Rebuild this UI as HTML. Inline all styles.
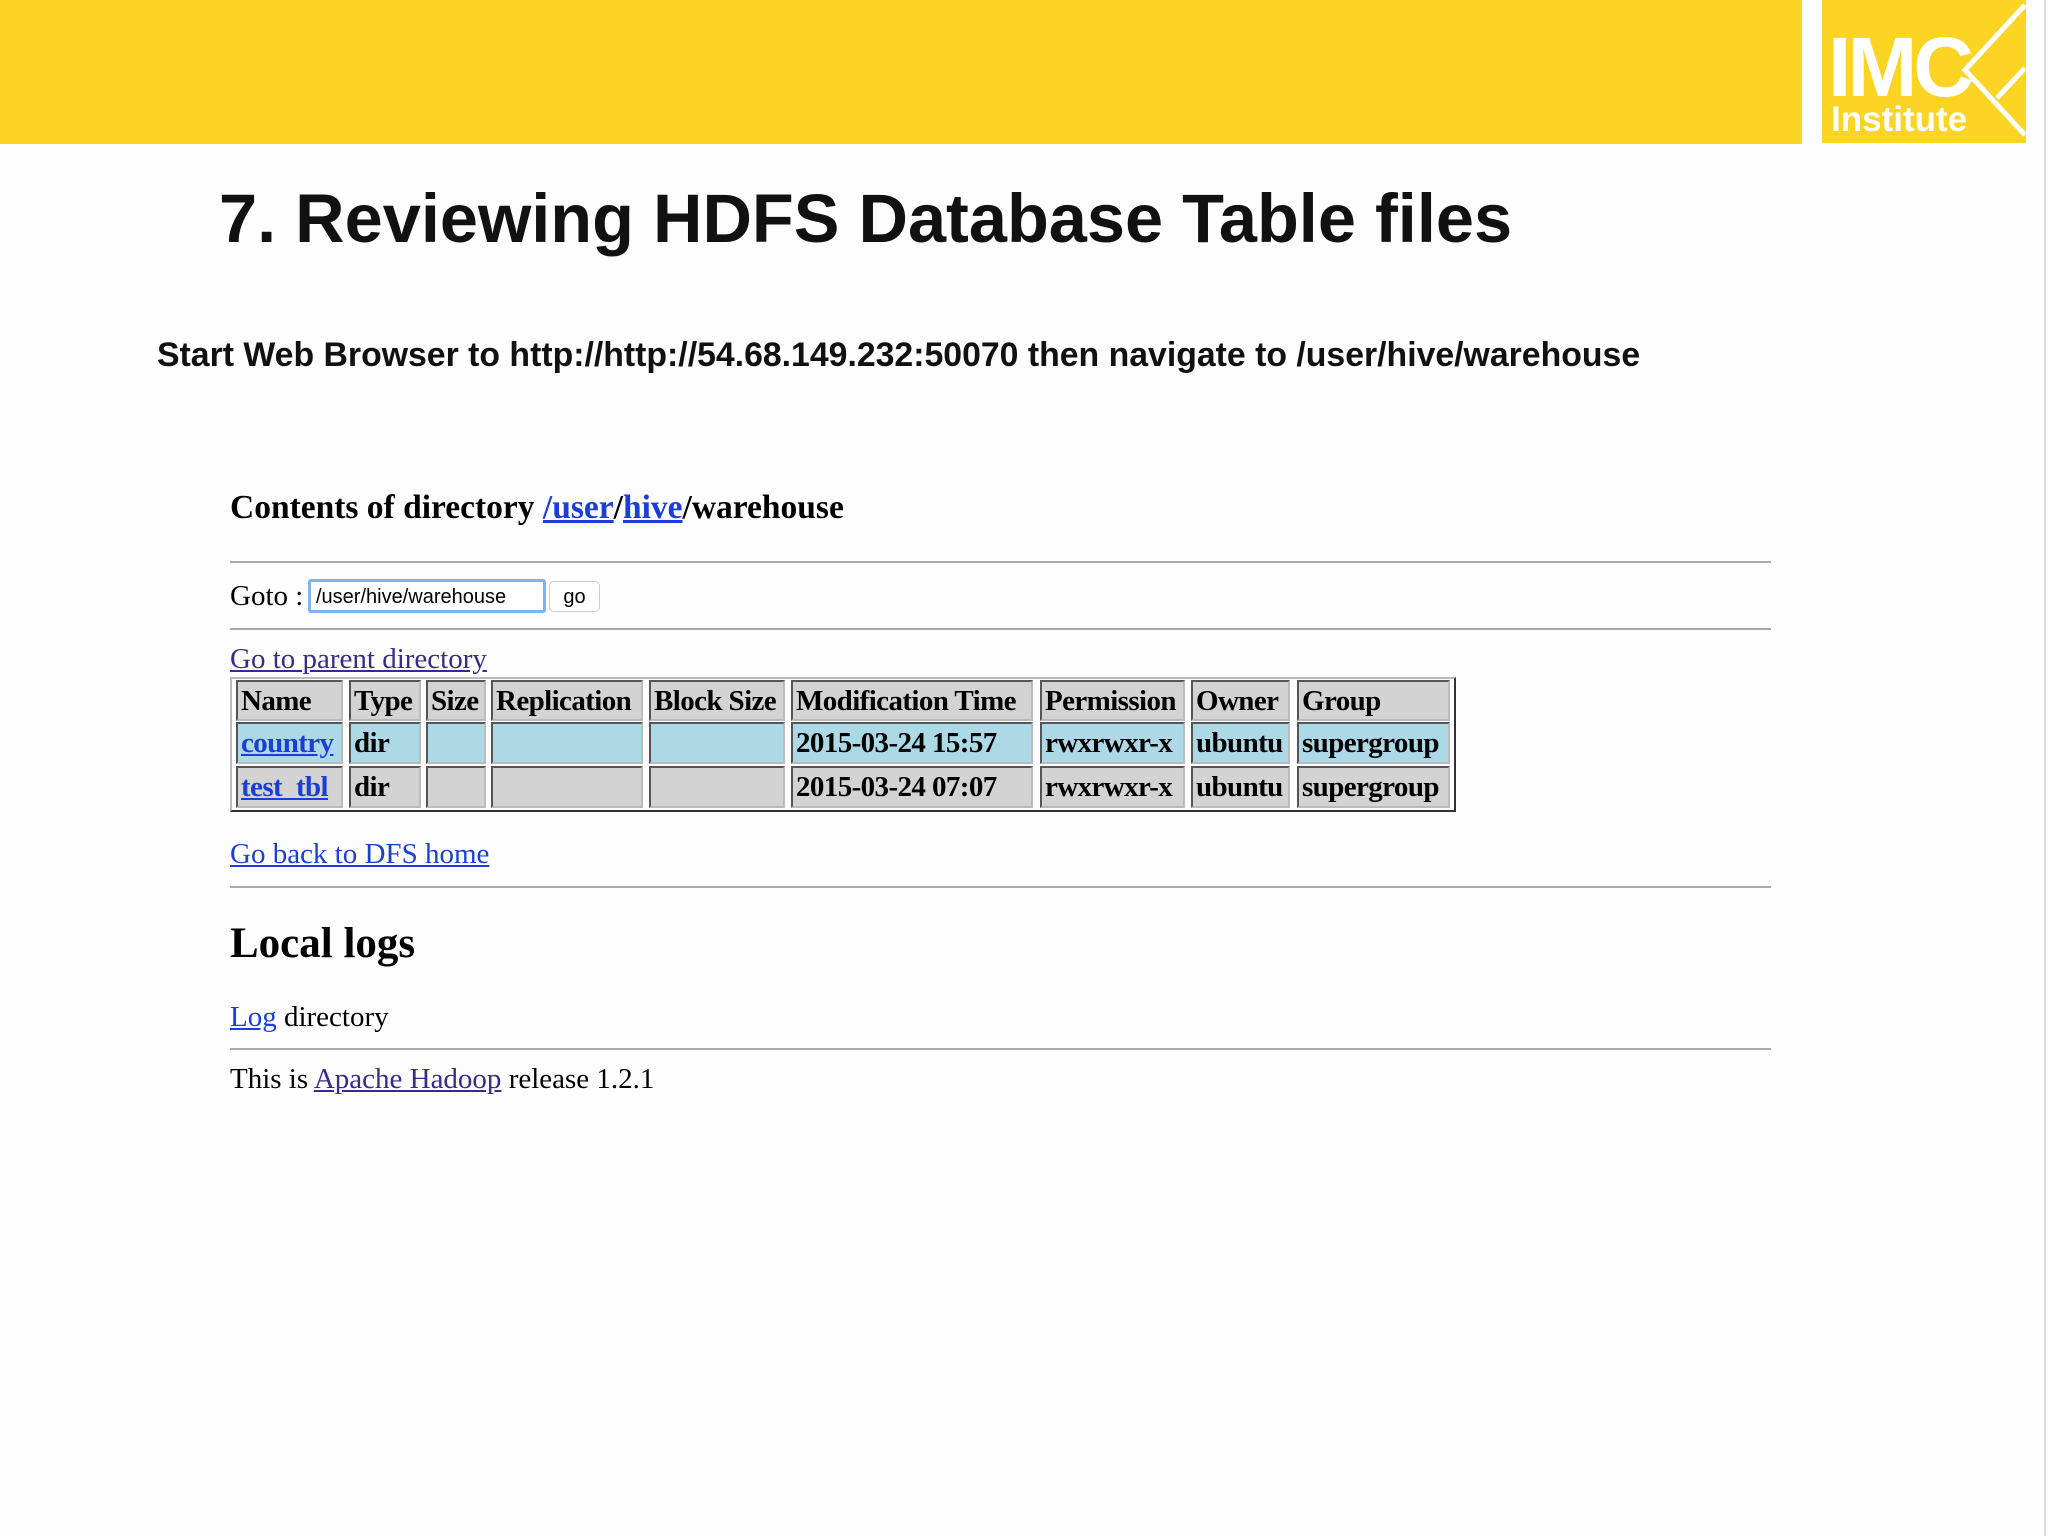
<!DOCTYPE html>
<html><head><meta charset="utf-8"><style>
body{margin:0;width:2048px;height:1536px;background:#fdfdfd;position:relative;overflow:hidden;font-family:"Liberation Serif",serif}
.a{position:absolute;white-space:nowrap}
.hr{position:absolute;left:230px;width:1541px;height:2px;background:#aaa}
a{color:#1a3fd8;text-decoration:underline}
.v{color:#3a2a8a}
.c{position:absolute;box-sizing:border-box;border:2px solid;border-color:#555 #bbb #bbb #555;font-weight:bold;font-size:29px;line-height:38px;padding-left:3px;color:#000;white-space:nowrap;overflow:hidden;letter-spacing:-0.6px}
</style></head><body>
<div class="a" style="left:0;top:0;width:1802px;height:144px;background:#fcd423"></div>
<div class="a" style="left:1822px;top:0;width:204px;height:143px;background:#fcd423"></div>
<div class="a" style="left:2044px;top:0;width:2px;height:1536px;background:#ddd"></div>
<div class="a" style="left:1828px;top:24px;font-family:'Liberation Sans',sans-serif;font-weight:bold;font-size:84px;color:#fff;letter-spacing:-4px;line-height:86px">IMC</div>
<div class="a" style="left:1831px;top:100px;font-family:'Liberation Sans',sans-serif;font-weight:bold;font-size:35px;color:#fff;line-height:40px">Institute</div>
<svg class="a" style="left:1780px;top:0" width="268" height="160"><polyline points="245,5 185,70 245,135" fill="none" stroke="#fff" stroke-width="5"/><line x1="217" y1="98" x2="245" y2="68" stroke="#fff" stroke-width="5"/></svg>
<div class="a" style="left:219px;top:177px;font-family:'Liberation Sans',sans-serif;font-weight:bold;font-size:68.5px;line-height:84px;color:#111">7. Reviewing HDFS Database Table files</div>
<div class="a" style="left:157px;top:334px;font-family:'Liberation Sans',sans-serif;font-weight:bold;font-size:33.8px;line-height:42px;color:#111">Start Web Browser to http://http://54.68.149.232:50070 then navigate to /user/hive/warehouse</div>
<div class="a" style="left:230px;top:487px;font-weight:bold;font-size:33.5px;line-height:42px">Contents of directory <a href="#">/user</a>/<a href="#">hive</a>/warehouse</div>
<div class="hr" style="top:561px"></div>
<div class="a" style="left:230px;top:578px;font-size:29px;line-height:36px">Goto :</div>
<div class="a" style="left:308px;top:579px;width:238px;height:34px;box-sizing:border-box;border:3px solid #7fb2ee;border-radius:3px;background:#fff;font-family:'Liberation Sans',sans-serif;font-size:20px;line-height:30px;padding-left:5px">/user/hive/warehouse</div>
<div class="a" style="left:549px;top:581px;width:51px;height:31px;box-sizing:border-box;border:1px solid #ccc;border-radius:5px;background:#fff;font-family:'Liberation Sans',sans-serif;font-size:20px;line-height:31px;text-align:center">go</div>
<div class="hr" style="top:628px"></div>
<div class="a" style="left:230px;top:641px;font-size:29px;line-height:36px"><a href="#" class="v">Go to parent directory</a></div>
<div class="a" style="left:230px;top:677px;width:1226px;height:135px;box-sizing:border-box;border:2px solid;border-color:#bbb #333 #333 #bbb"></div>
<div class="c" style="left:236px;top:680px;width:107px;height:41px;background:#d3d3d3">Name</div>
<div class="c" style="left:349px;top:680px;width:72px;height:41px;background:#d3d3d3">Type</div>
<div class="c" style="left:426px;top:680px;width:60px;height:41px;background:#d3d3d3">Size</div>
<div class="c" style="left:491px;top:680px;width:152px;height:41px;background:#d3d3d3">Replication</div>
<div class="c" style="left:649px;top:680px;width:136px;height:41px;background:#d3d3d3">Block Size</div>
<div class="c" style="left:791px;top:680px;width:242px;height:41px;background:#d3d3d3">Modification Time</div>
<div class="c" style="left:1040px;top:680px;width:145px;height:41px;background:#d3d3d3">Permission</div>
<div class="c" style="left:1191px;top:680px;width:99px;height:41px;background:#d3d3d3">Owner</div>
<div class="c" style="left:1297px;top:680px;width:153px;height:41px;background:#d3d3d3">Group</div>
<div class="c" style="left:236px;top:722px;width:107px;height:42px;background:#add8e6"><a href="#">country</a></div>
<div class="c" style="left:349px;top:722px;width:72px;height:42px;background:#add8e6">dir</div>
<div class="c" style="left:426px;top:722px;width:60px;height:42px;background:#add8e6"></div>
<div class="c" style="left:491px;top:722px;width:152px;height:42px;background:#add8e6"></div>
<div class="c" style="left:649px;top:722px;width:136px;height:42px;background:#add8e6"></div>
<div class="c" style="left:791px;top:722px;width:242px;height:42px;background:#add8e6">2015-03-24 15:57</div>
<div class="c" style="left:1040px;top:722px;width:145px;height:42px;background:#add8e6">rwxrwxr-x</div>
<div class="c" style="left:1191px;top:722px;width:99px;height:42px;background:#add8e6">ubuntu</div>
<div class="c" style="left:1297px;top:722px;width:153px;height:42px;background:#add8e6">supergroup</div>
<div class="c" style="left:236px;top:766px;width:107px;height:42px;background:#d3d3d3"><a href="#">test_tbl</a></div>
<div class="c" style="left:349px;top:766px;width:72px;height:42px;background:#d3d3d3">dir</div>
<div class="c" style="left:426px;top:766px;width:60px;height:42px;background:#d3d3d3"></div>
<div class="c" style="left:491px;top:766px;width:152px;height:42px;background:#d3d3d3"></div>
<div class="c" style="left:649px;top:766px;width:136px;height:42px;background:#d3d3d3"></div>
<div class="c" style="left:791px;top:766px;width:242px;height:42px;background:#d3d3d3">2015-03-24 07:07</div>
<div class="c" style="left:1040px;top:766px;width:145px;height:42px;background:#d3d3d3">rwxrwxr-x</div>
<div class="c" style="left:1191px;top:766px;width:99px;height:42px;background:#d3d3d3">ubuntu</div>
<div class="c" style="left:1297px;top:766px;width:153px;height:42px;background:#d3d3d3">supergroup</div>
<div class="a" style="left:230px;top:836px;font-size:29px;line-height:36px"><a href="#">Go back to DFS home</a></div>
<div class="hr" style="top:886px"></div>
<div class="a" style="left:230px;top:918px;font-weight:bold;font-size:43px;line-height:52px">Local logs</div>
<div class="a" style="left:230px;top:999px;font-size:29px;line-height:36px"><a href="#">Log</a> directory</div>
<div class="hr" style="top:1048px"></div>
<div class="a" style="left:230px;top:1061px;font-size:29px;line-height:36px">This is <a href="#" class="v">Apache Hadoop</a> release 1.2.1</div>
</body></html>
